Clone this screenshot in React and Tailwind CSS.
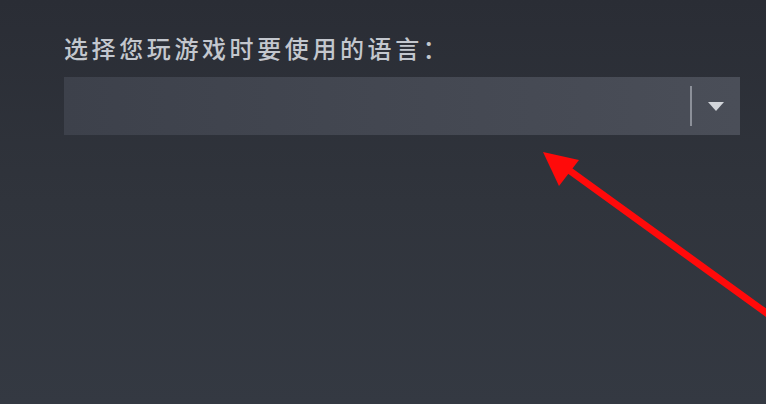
import React from "react";

function RedArrow() {
  return (
    <svg
      className="absolute left-0 top-0 pointer-events-none"
      width="766"
      height="404"
      viewBox="0 0 766 404"
    >
      <line x1="566" y1="168" x2="790" y2="330" stroke="#ff0a0a" strokeWidth="7" strokeLinecap="round" />
      <polygon points="543,152 579,160 559,186" fill="#ff0a0a" />
    </svg>
  );
}

export default function App() {
  return (
    <div
      className="relative w-[766px] h-[404px] overflow-hidden bg-gradient-to-b from-[#2a2d35] via-[#30343c] to-[#343942]"
      style={{ fontFamily: '"Noto Sans CJK SC", "Noto Sans", sans-serif' }}
    >
      <div className="pl-16 pr-[26px] pt-[35px]">
        <div className="text-[24px] leading-[26px] tracking-[3.6px] font-medium text-[#c3c7ce]">
          选择您玩游戏时要使用的语言：
        </div>
        <div className="mt-[16px] h-[58px] flex items-center justify-end bg-gradient-to-r from-[#3d414b] to-[#4a4e58]">
          <div className="w-[2px] h-[40px] bg-[#8c9099]" />
          <div className="w-[48px] flex justify-center">
            <div className="w-0 h-0 border-l-[8px] border-r-[8px] border-t-[9px] border-l-transparent border-r-transparent border-t-[#d2d5da]" />
          </div>
        </div>
      </div>
      <RedArrow />
    </div>
  );
}
